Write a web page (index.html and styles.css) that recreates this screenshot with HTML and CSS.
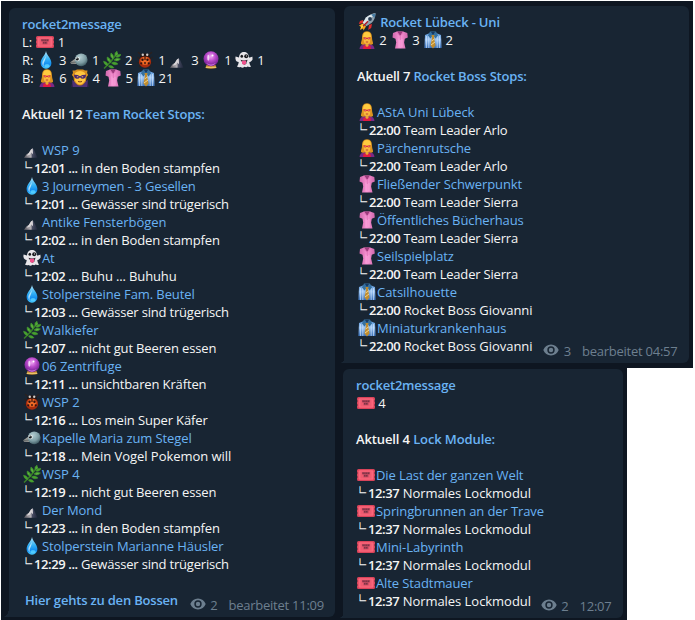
FILE: index.html
```html
<!DOCTYPE html>
<html lang="de">
<head>
<meta charset="utf-8">
<title>rocket2message</title>
<link rel="stylesheet" href="styles.css">
</head>
<body>
<svg class="defs" width="0" height="0" aria-hidden="true">
  <defs>
    <linearGradient id="gDrop" x1="0" y1="0" x2="0" y2="1"><stop offset="0" stop-color="#b9e8fb"/><stop offset=".45" stop-color="#35b3f5"/><stop offset=".75" stop-color="#128df0"/><stop offset="1" stop-color="#4dd0ff"/></linearGradient>
    <radialGradient id="gBird" cx=".4" cy=".3" r=".75"><stop offset="0" stop-color="#b3cdd2"/><stop offset=".6" stop-color="#7d9ca3"/><stop offset="1" stop-color="#38535c"/></radialGradient>
    <radialGradient id="gBall" cx=".5" cy=".35" r=".65"><stop offset="0" stop-color="#f1a6f4"/><stop offset=".45" stop-color="#bb4ccb"/><stop offset="1" stop-color="#6b1a8c"/></radialGradient>
    <linearGradient id="gShirt" x1="0" y1="0" x2="0" y2="1"><stop offset="0" stop-color="#5c97d8"/><stop offset=".45" stop-color="#9cc4f2"/><stop offset="1" stop-color="#3a70b8"/></linearGradient>
    <linearGradient id="gBlouse" x1="0" y1="0" x2="1" y2="0"><stop offset="0" stop-color="#cf66ab"/><stop offset=".5" stop-color="#f995d4"/><stop offset="1" stop-color="#cf66ab"/></linearGradient>
    <linearGradient id="gRock" x1="0" y1="0" x2="1" y2="0"><stop offset="0" stop-color="#5b5860"/><stop offset=".5" stop-color="#b5b1b6"/><stop offset=".62" stop-color="#454a60"/><stop offset="1" stop-color="#1d2438"/></linearGradient>
    <symbol id="ticket" viewBox="0 0 18 18"><path d="M1.500 3h15q1.500 0 1.500 1.500V6l-.6 1 .6 1v2l-.6 1 .6 1v1.500q0 1.500-1.500 1.500h-15Q0 15 0 13.500V12l.6-1L0 10V8l.6-1L0 6V4.500Q0 3 1.500 3z" fill="#d9445a"/><rect x="1.500" y="4.200" width="15" height="9.600" rx="1" fill="#fb667b"/><rect x="3.500" y="5.500" width="11" height="7" fill="#ee5b70"/><path d="M5 6h8v2.500H5zM6.500 8.500h5v2.800h-5z" fill="#b8475c"/><path d="M5.500 7.300h7M7 9.800h4" stroke="#7c3245" stroke-width="1.600" stroke-dasharray="1.300 .5"/></symbol>
    <symbol id="drop" viewBox="0 0 18 18"><path d="M9 0c.6 4 5.400 7.600 5.400 12A5.400 5.600 0 0 1 9 17.800 5.400 5.600 0 0 1 3.600 12C3.600 7.600 8.400 4 9 0z" fill="url(#gDrop)"/><path d="M8.500 5c-.6 3-3 4-3.200 7.500 0 1 .6 2 1.300 2.400C6.300 11 9.200 9 8.500 5z" fill="#e3f8ff" opacity=".7"/><ellipse cx="10" cy="14.700" rx="2.500" ry="1.600" fill="#63d8ff" opacity=".7"/></symbol>
    <symbol id="bird" viewBox="0 0 18 18"><path d="M6 7L.3 11.300 1 12.700l6 .3z" fill="#9a9a96"/><path d="M.3 11.500l6.200-.4" stroke="#565b5c" stroke-width=".8"/><circle cx="11.200" cy="8.800" r="6.400" fill="url(#gBird)"/><circle cx="7.500" cy="8" r="2.300" fill="#e6eff0"/><circle cx="7.200" cy="8" r="1.600" fill="#15191b"/><circle cx="6.800" cy="7.500" r=".5" fill="#fff"/></symbol>
    <symbol id="leaf" viewBox="0 0 18 18"><path d="M1 17.500C5 14 9 10 13.500 3" stroke="#387d28" stroke-width="1.500" fill="none"/><g fill="#47a02f" stroke="#47a02f" stroke-width=".5"><path d="M12.500 5C11 2.500 12.500 1 14 .2c.8 2 .6 3.500-1.500 4.800z"/><path d="M13 6c1-2.600 3-2.800 5-2.500-1 2.300-3 3.200-5 2.500z"/><path d="M10 8C7 6 7.500 4 8 2c2.400 1.600 3 3.500 2 6z"/><path d="M11 9c2-2.300 4-2 6.500-1-2 2-4.200 2.600-6.500 1z"/><path d="M7.500 11.500C4 10 4 8 4.200 6c2.600 1 4 3 3.300 5.500z"/><path d="M8.500 12c2.500-1.700 4.500-.8 6.500 1-2.600 1.300-4.800 1-6.500-1z"/><path d="M4.800 14.500C1.500 14 1 12 .5 10.200 3.200 10.500 5 12 4.800 14.500z"/><path d="M5.500 15c2.500-1 4-.2 5.500 1.800-2.400.8-4.200.3-5.500-1.800z"/></g><path d="M9.500 6.500L8.700 4M13 9l2.500-.6M6 9.500L5 8M14 4l.2-2" stroke="#7cc455" stroke-width=".6"/></symbol>
    <symbol id="bug" viewBox="0 0 18 18"><path d="M5 3.500L2 1.200M13 3.500l3-2.300M3.500 8L1.500 6M14.500 8l2-2M3 11.500l-2 .5M15 11.500l2 .5M4.500 14.500L3 16M13.500 14.500l1.500 1.500" stroke="#2c201e" stroke-width="1.100"/><circle cx="9" cy="10.700" r="6.100" fill="#a82c0e"/><ellipse cx="9" cy="9.800" rx="4.600" ry="4" fill="#ee6a26"/><path d="M3.800 6.500Q4 2.500 9 2.300q5 .2 5.200 4.200Q9 4.500 3.800 6.500z" fill="#221716"/><circle cx="6.800" cy="3.800" r="1.200" fill="#cfcac7"/><circle cx="11.200" cy="3.800" r="1.200" fill="#cfcac7"/><path d="M9 5.500v3.500" stroke="#351510" stroke-width="1.200"/><g fill="#321110"><circle cx="6.500" cy="8.700" r="1.200"/><circle cx="11.500" cy="8.700" r="1.200"/><circle cx="5.300" cy="12.300" r="1.100"/><circle cx="12.700" cy="12.300" r="1.100"/><circle cx="9" cy="12" r=".9"/></g></symbol>
    <symbol id="mountain" viewBox="0 0 18 18"><path d="M1 16.800L3.500 13.200 6 11.800 8 8.500 9.700 7.200 11 9 14.700 16.800z" fill="url(#gRock)"/><path d="M9.700 7.200L8 8.600 5.800 12l-2.300 2.700 3-.7 2-2.500 1.600 2z" fill="#d9d6d9"/></symbol>
    <symbol id="ball" viewBox="0 0 18 18"><path d="M4.500 14h9l1 3q-5.500 1.300-11 0z" fill="#c78c31"/><path d="M3.800 16.300h10.400" stroke="#efd079" stroke-width="1"/><circle cx="9" cy="7.700" r="7.500" fill="url(#gBall)"/><ellipse cx="6.300" cy="6.700" rx="1.100" ry="3" fill="#fff" opacity=".7"/><circle cx="10.500" cy="4.500" r="1" fill="#fff"/><path d="M4 11.800q5 3.600 10 0-2 3.100-5 3.100t-5-3.100z" fill="#e08bea" opacity=".7"/></symbol>
    <symbol id="ghost" viewBox="0 0 18 18"><path d="M9 1C12.500 1 13.800 3.500 14 6.500 15.500 6.500 16 5.500 17.500 5.700 17.200 7 18 8 17.300 9c-.8 1.300-2 2-3 2.100.2 2 .7 3.200 1.700 4.300-1.500 1-2.500.4-3.500.2-.8 1-2 .8-3 .2-1.500 1.200-3 1-3.700.1-1.500.8-2.800.4-3.800-.3C3 14.500 3.500 13 3.700 11.100 2 11 .5 9.600.6 8.200.2 7.500.5 6.500.6 5.600c1.400 0 2 .9 3.400.9C4.200 3.500 5.500 1 9 1z" fill="#e8e6ea"/><ellipse cx="6.800" cy="5.300" rx="1.300" ry="1.500" fill="#19191d"/><circle cx="11.200" cy="5.300" r="2" fill="#19191d"/><circle cx="11.500" cy="4.900" r=".6" fill="#ccc"/><path d="M5.500 8.800q3.500 1.600 7 0-.3 2-1 2.200v1.500q-2 2.300-4 0v-1.400Q6 10.500 5.500 8.800z" fill="#312430"/><path d="M7 9.700h4v3q-2 2.300-4 0z" fill="#f0528c"/></symbol>
    <symbol id="hero" viewBox="0 0 18 18"><path d="M1.500 18q.3-4 4.500-5h6q4.200 1 4.500 5z" fill="#7a2a86"/><path d="M5 18l.6-3.500h6.800l.6 3.500z" fill="#e01a42"/><path d="M9 .2C5 .2 4 3.500 4 7c0 2.500-1.300 4-1 6 1.500 1.200 3 .6 4 .3h4c1 .3 2.500.9 4-.3.3-2-1-3.500-1-6C14 3.500 13 .2 9 .2z" fill="#dd9420"/><path d="M5 6q0-5 4-5t4 5z" fill="#ffcb3f"/><path d="M5.800 6h6.400v4q-.5 3.300-3.200 3.300T5.800 10z" fill="#fbb93f"/><path d="M7.500 12.500h3V15L9 16l-1.500-1z" fill="#eba534"/><path d="M5.600 6.400q1.800-.3 3.400.6 1.600-.9 3.400-.6 0 2-1.500 2T9 7.600q-.4.800-1.900.8t-1.500-2z" fill="#cf2038"/><path d="M6.600 7.300h1M10.400 7.300h1" stroke="#ffc5a0" stroke-width=".9"/><path d="M7.800 11h2.400" stroke="#b3382f" stroke-width=".9"/></symbol>
    <symbol id="villain" viewBox="0 0 18 18"><path d="M.3 18Q.6 12.500 4 12h10q3.400.5 3.700 6z" fill="#35214f"/><path d="M1 11l4 2 4 4 4-4 4-2-1 7H2z" fill="#4e3275"/><path d="M9 .4L6 .6 4 1.600 1.500 1.500 2 4 .9 6l1.600 2L3 12q3 4.600 6 4.600T15 12l.5-4 1.600-2-1-2 .4-2.500-2.500.1-2-1z" fill="#d98f1e"/><path d="M4 4q5-4 10 0v7.500q-2 4-5 4t-5-4z" fill="#ffc640"/><path d="M3 5.800q3.500-.2 6 1.400 2.500-1.600 6-1.400-.2 4-3 4-2 0-3-1.500-1 1.500-3 1.500-2.800 0-3-4z" fill="#4a2771"/><path d="M5.800 7.800h1.500M10.700 7.800h1.500" stroke="#ffd36a" stroke-width=".9"/><path d="M7 12.500q2 .8 4 0" stroke="#7c3c1c" fill="none"/></symbol>
    <symbol id="blouse" viewBox="0 0 18 18"><path d="M6 .5L2 2 1.500 6.500l3 1.200.7 3.800L4 17.500h10.500l-1.400-6 .7-3.800 3-1.200-.5-4.500L12 .5z" fill="url(#gBlouse)"/><path d="M6 .5h6L9.200 5z" fill="#9e3c7e"/><path d="M6 .8Q7 4 9.200 5M12 .8Q11 4 9.200 5v4" stroke="#df72b8" fill="none"/><path d="M8 7.500v9M11 8v8" stroke="#ffc5ec" stroke-width=".7" opacity=".6"/></symbol>
    <symbol id="shirt" viewBox="0 0 18 18"><path d="M6 2L1 4 .4 17h17.200L17 4l-5-2z" fill="url(#gShirt)"/><path d="M2.500 5v12M4.800 5v12M13.200 5v12M15.500 5v12" stroke="#deefff" stroke-width=".8" opacity=".75"/><path d="M6 .5h6l2 4-2.500 3L9 4 6.500 7.500 4 4.500z" fill="#35709f"/><path d="M7 1h4L9 4z" fill="#173a63"/><path d="M7.500 4h3l-.5 2.500 1.500 8L9 17.500l-2.500-3L8 6.500z" fill="#c08c2e"/><path d="M7.500 10l3-2M7 14l4-3" stroke="#f3d48b"/></symbol>
    <symbol id="rocket" viewBox="0 0 18 18"><path d="M1 12.500l4-2 3 3-2.500 4-.5-2-3 1.500 1-3z" fill="#f9a51b"/><path d="M4 11l2 2-3.500 3z" fill="#ffe14b"/><path d="M5 7L2 8 .8 11 6 10zM11 12l-.8 5 3-2 .8-4z" fill="#dd2c2c"/><path d="M17.600.4Q12 .6 8 4.500L4.800 9.800l3.500 3.500L13.500 10Q17.400 6 17.600.4z" fill="#8da0ad"/><path d="M17.600.4Q12 .6 8 4.500L4.800 9.800l1.700 1.700z" fill="#dde7ec"/><path d="M17.600.4L13 1.600l3.500 3.300z" fill="#477da4"/><circle cx="12" cy="6" r="1.900" fill="#283e55"/><path d="M10 8.200l-5 5" stroke="#b31c29" stroke-width="1.500"/></symbol>
    <symbol id="eye" viewBox="0 0 16 12"><path fill-rule="evenodd" d="M8 .5c3.600 0 6.400 2.200 7.700 5.500C14.400 9.300 11.600 11.500 8 11.500S1.600 9.300.3 6C1.600 2.700 4.400.5 8 .5zM8 2.300a3.700 3.700 0 1 0 0 7.400 3.700 3.700 0 0 0 0-7.400z"/><circle cx="8" cy="6" r="2.200"/></symbol>
  </defs>
</svg>
<main class="board">
  <section class="pane pane-left">
    <article class="bubble">
      <p class="link strong">rocket2message</p>
      <p class="counts">L: <svg class="icon"><use href="#ticket"/></svg> 1</p>
      <p class="counts">R: <svg class="icon"><use href="#drop"/></svg> 3 <svg class="icon"><use href="#bird"/></svg> 1 <svg class="icon"><use href="#leaf"/></svg> 2 <svg class="icon"><use href="#bug"/></svg> 1 <svg class="icon"><use href="#mountain"/></svg> 3 <svg class="icon"><use href="#ball"/></svg> 1 <svg class="icon"><use href="#ghost"/></svg> 1</p>
      <p class="counts">B: <svg class="icon"><use href="#hero"/></svg> 6 <svg class="icon"><use href="#villain"/></svg> 4 <svg class="icon"><use href="#blouse"/></svg> 5 <svg class="icon"><use href="#shirt"/></svg> 21</p>
      <p class="title">Aktuell 12 <span class="link">Team Rocket Stops:</span></p>
      <p class="link wide"><svg class="icon"><use href="#mountain"/></svg>WSP 9</p>
      <p><span class="corner">└</span><b>12:01 ...</b> in den Boden stampfen</p>
      <p class="link tight"><svg class="icon"><use href="#drop"/></svg>3 Journeymen - 3 Gesellen</p>
      <p class="tight"><span class="corner">└</span><b>12:01 ...</b> Gewässer sind trügerisch</p>
      <p class="link wide"><svg class="icon"><use href="#mountain"/></svg>Antike Fensterbögen</p>
      <p><span class="corner">└</span><b>12:02 ...</b> in den Boden stampfen</p>
      <p class="link"><svg class="icon"><use href="#ghost"/></svg>At</p>
      <p><span class="corner">└</span><b>12:02 ...</b> Buhu ... Buhuhu</p>
      <p class="link"><svg class="icon"><use href="#drop"/></svg>Stolpersteine Fam. Beutel</p>
      <p class="tight"><span class="corner">└</span><b>12:03 ...</b> Gewässer sind trügerisch</p>
      <p class="link wide"><svg class="icon"><use href="#leaf"/></svg>Walkiefer</p>
      <p><span class="corner">└</span><b>12:07 ...</b> nicht gut Beeren essen</p>
      <p class="link"><svg class="icon"><use href="#ball"/></svg>06 Zentrifuge</p>
      <p><span class="corner">└</span><b>12:11 ...</b> unsichtbaren Kräften</p>
      <p class="link wide"><svg class="icon"><use href="#bug"/></svg>WSP 2</p>
      <p><span class="corner">└</span><b>12:16 ...</b> Los mein Super Käfer</p>
      <p class="link"><svg class="icon"><use href="#bird"/></svg>Kapelle Maria zum Stegel</p>
      <p class="wide"><span class="corner">└</span><b>12:18 ...</b> Mein Vogel Pokemon will</p>
      <p class="link wide"><svg class="icon"><use href="#leaf"/></svg>WSP 4</p>
      <p><span class="corner">└</span><b>12:19 ...</b> nicht gut Beeren essen</p>
      <p class="link"><svg class="icon"><use href="#mountain"/></svg>Der Mond</p>
      <p><span class="corner">└</span><b>12:23 ...</b> in den Boden stampfen</p>
      <p class="link"><svg class="icon"><use href="#drop"/></svg>Stolperstein Marianne Häusler</p>
      <p class="tight"><span class="corner">└</span><b>12:29 ...</b> Gewässer sind trügerisch</p>
      <div class="last last-link">
        <p class="link strong">Hier gehts zu den Bossen</p>
        <div class="meta"><svg class="eye"><use href="#eye"/></svg><span class="views">2</span><span>bearbeitet 11:09</span></div>
      </div>
    </article>
  </section>
  <div class="side">
    <section class="pane pane-top">
      <article class="bubble">
        <p class="link strong"><svg class="icon"><use href="#rocket"/></svg> Rocket Lübeck - Uni</p>
        <p class="counts"><svg class="icon"><use href="#hero"/></svg> 2 <svg class="icon"><use href="#blouse"/></svg> 3 <svg class="icon"><use href="#shirt"/></svg> 2</p>
        <p class="title">Aktuell 7 <span class="link">Rocket Boss Stops:</span></p>
        <p class="link"><svg class="icon"><use href="#hero"/></svg>AStA Uni Lübeck</p>
        <p class="tight"><span class="corner">└</span><b>22:00</b> Team Leader Arlo</p>
        <p class="link"><svg class="icon"><use href="#hero"/></svg>Pärchenrutsche</p>
        <p class="tight"><span class="corner">└</span><b>22:00</b> Team Leader Arlo</p>
        <p class="link"><svg class="icon"><use href="#blouse"/></svg>Fließender Schwerpunkt</p>
        <p class="tight"><span class="corner">└</span><b>22:00</b> Team Leader Sierra</p>
        <p class="link"><svg class="icon"><use href="#blouse"/></svg>Öffentliches Bücherhaus</p>
        <p class="tight"><span class="corner">└</span><b>22:00</b> Team Leader Sierra</p>
        <p class="link"><svg class="icon"><use href="#blouse"/></svg>Seilspielplatz</p>
        <p class="tight"><span class="corner">└</span><b>22:00</b> Team Leader Sierra</p>
        <p class="link wide"><svg class="icon"><use href="#shirt"/></svg>Catsilhouette</p>
        <p class="wide"><span class="corner">└</span><b>22:00</b> Rocket Boss Giovanni</p>
        <p class="link wide"><svg class="icon"><use href="#shirt"/></svg>Miniaturkrankenhaus</p>
        <div class="last">
          <p class="wide"><span class="corner">└</span><b>22:00</b> Rocket Boss Giovanni</p>
          <div class="meta"><svg class="eye"><use href="#eye"/></svg><span class="views">3</span><span>bearbeitet 04:57</span></div>
        </div>
      </article>
    </section>
    <section class="pane pane-bottom">
      <article class="bubble">
        <p class="link strong">rocket2message</p>
        <p class="counts"><svg class="icon"><use href="#ticket"/></svg> 4</p>
        <p class="title wide">Aktuell 4 <span class="link">Lock Module:</span></p>
        <p class="link"><svg class="icon"><use href="#ticket"/></svg>Die Last der ganzen Welt</p>
        <p class="wide"><span class="corner">└</span><b>12:37</b> Normales Lockmodul</p>
        <p class="link"><svg class="icon"><use href="#ticket"/></svg>Springbrunnen an der Trave</p>
        <p class="wide"><span class="corner">└</span><b>12:37</b> Normales Lockmodul</p>
        <p class="link wide"><svg class="icon"><use href="#ticket"/></svg>Mini-Labyrinth</p>
        <p class="wide"><span class="corner">└</span><b>12:37</b> Normales Lockmodul</p>
        <p class="link"><svg class="icon"><use href="#ticket"/></svg>Alte Stadtmauer</p>
        <div class="last">
          <p class="wide"><span class="corner">└</span><b>12:37</b> Normales Lockmodul</p>
          <div class="meta"><svg class="eye"><use href="#eye"/></svg><span class="views">2</span><span>12:07</span></div>
        </div>
      </article>
    </section>
  </div>
</main>
</body>
</html>
```
FILE: styles.css
```css
* { box-sizing: border-box; }

body {
  margin: 0;
  background: #fff;
  color: #f5f5f5;
  font: 13px/18px "Open Sans", "Noto Sans", sans-serif;
  overflow: hidden;
}

.defs { display: block; }

.board {
  display: flex;
  height: 620px;
  padding: 1px 0 0 1px;
}

.side {
  display: flex;
  flex-direction: column;
  align-items: flex-start;
}

.pane { background: #0e1621; }

.pane-left { width: 339px; padding: 7px 5px 3px 8px; }
.pane-top { width: 353px; height: 367px; padding: 5px 4px 5px 4px; }
.pane-bottom { width: 287px; height: 252px; padding: 1px 4px 2px 3px; }

.bubble {
  position: relative;
  height: 100%;
  padding: 7px 11px 0 13px;
  border-radius: 6px 6px 6px 0;
  background: #182533;
}

.bubble::before {
  content: "";
  position: absolute;
  right: 100%;
  bottom: 0;
  width: 6px;
  height: 9px;
  background: radial-gradient(ellipse 6px 9px at 0 0, transparent 96%, #182533 100%);
}

.side .bubble::before { width: 4px; }

p {
  height: 18px;
  margin: 0;
  letter-spacing: -.14px;
  white-space: nowrap;
}

.link { color: #6ab3f3; }

p.link { letter-spacing: -.1px; }
p.wide { letter-spacing: -.04px; }
p.tight { letter-spacing: -.19px; }
p.counts { letter-spacing: -.05px; }

b, .strong, .title { font-weight: 600; }
b { letter-spacing: -.4px; }
p.strong, p.title { letter-spacing: -.2px; }
p.title.wide { letter-spacing: -.12px; }

.title { margin: 18px 0; }

.icon {
  width: 18px;
  height: 18px;
  margin: 0 1px;
  vertical-align: top;
}

.counts .icon { margin: 0 .5px; }
.strong .icon { margin: 0 1.5px 0 .5px; }

.corner {
  display: inline-block;
  width: 14px;
  height: 18px;
  margin-left: -2px;
  font: 12px/18px "Noto Sans CJK JP", sans-serif;
  -webkit-text-stroke: .3px currentColor;
  vertical-align: top;
}

.last {
  display: flex;
  justify-content: space-between;
}

.last-link {
  margin-top: 18px;
  padding-left: 3px;
}

.meta {
  display: flex;
  height: 18px;
  margin-top: 5px;
  color: #6d7f8f;
  letter-spacing: -.24px;
}

.side .meta { margin-right: .5px; }

.eye {
  width: 16px;
  height: 12px;
  margin: 2px 4.500px 0 0;
  fill: currentColor;
}

.views { margin-right: 11px; }
```
